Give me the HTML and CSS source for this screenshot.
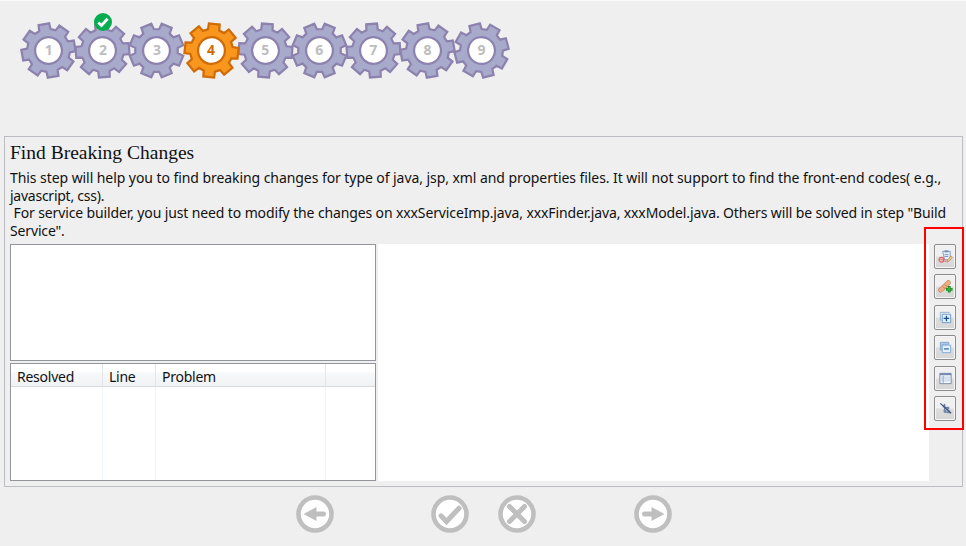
FILE: index.html
```html
<!DOCTYPE html>
<html lang="en">
<head>
<meta charset="utf-8">
<title>Find Breaking Changes</title>
<link rel="stylesheet" href="styles.css">
</head>
<body>
<svg class="defs" width="0" height="0">
  <symbol id="gear" viewBox="-29 -29 58 58">
    <path d="M-5.6-20.3L-5.3-26.2L5.3-26.2L5.6-20.3L10.4-18.3L14.8-22.3L22.3-14.8L18.3-10.4L20.3-5.6L26.2-5.3L26.2 5.3L20.3 5.6L18.3 10.4L22.3 14.8L14.8 22.3L10.4 18.3L5.6 20.3L5.3 26.2L-5.3 26.2L-5.6 20.3L-10.4 18.3L-14.8 22.3L-22.3 14.8L-18.3 10.4L-20.3 5.6L-26.2 5.3L-26.2-5.3L-20.3-5.6L-18.3-10.4L-22.3-14.8L-14.8-22.3L-10.4-18.3Z"/>
    <circle r="13.2" fill="#fff"/>
  </symbol>
</svg>
<header class="steps">
  <div class="step"><svg class="gear r1"><use href="#gear"/></svg><b>1</b></div>
  <div class="step"><svg class="gear r2"><use href="#gear"/></svg><b>2</b>
    <svg class="done" viewBox="0 0 18 18"><circle cx="9" cy="9" r="9" fill="#06ac50"/><path d="M4.3 9.4L7.5 12.5L13.6 5.8" fill="none" stroke="#fff" stroke-width="2.8"/></svg></div>
  <div class="step"><svg class="gear r3"><use href="#gear"/></svg><b>3</b></div>
  <div class="step current"><svg class="gear r4"><use href="#gear"/></svg><b>4</b></div>
  <div class="step"><svg class="gear r5"><use href="#gear"/></svg><b>5</b></div>
  <div class="step"><svg class="gear r3"><use href="#gear"/></svg><b>6</b></div>
  <div class="step"><svg class="gear r2"><use href="#gear"/></svg><b>7</b></div>
  <div class="step"><svg class="gear r1"><use href="#gear"/></svg><b>8</b></div>
  <div class="step"><svg class="gear r9"><use href="#gear"/></svg><b>9</b></div>
</header>
<main class="page">
  <h1>Find Breaking Changes</h1>
  <div class="intro">
    <p class="l1">This step will help you to find breaking changes for type of java, jsp, xml and properties files. It will not support to find the front-end codes( e.g.,</p>
    <p class="l2">javascript, css).</p>
    <p class="l3"> For service builder, you just need to modify the changes on xxxServiceImp.java, xxxFinder.java, xxxModel.java. Others will be solved in step "Build</p>
    <p class="l4">Service".</p>
  </div>
  <div class="work">
    <div class="left">
      <div class="tree"></div>
      <div class="table">
        <div class="col c1"><span>Resolved</span></div>
        <div class="col c2"><span>Line</span></div>
        <div class="col c3"><span>Problem</span></div>
        <div class="col c4"><span></span></div>
      </div>
    </div>
    <div class="viewer"></div>
    <div class="tools">
      <button><svg viewBox="0 0 16 16"><path d="M5 2.5h8v9H7z" fill="#e8f0fa" stroke="#8199bd"/><path d="M7 1.5h4v2H7z" fill="#7089b3"/><path d="M7 6h4M7 8h4" stroke="#7590c0"/><circle cx="3.7" cy="11.5" r="2.5" fill="#fbdada" stroke="#dc6060" stroke-width="1.3"/><path d="M2.3 11.5h2.8" stroke="#d85555"/><path d="M9.500 14l.8-2.600 3.500-4 1.600 1.400-3.600 4.200z" fill="#ecc67a" stroke="#a97d48" stroke-width=".6"/><path d="M7 12h2v2H7z" fill="#e88484"/></svg></button>
      <button><svg viewBox="0 0 16 16"><path d="M2.8 11.8L11 3.9" stroke="#c88260" stroke-width="5.2" stroke-linecap="round"/><path d="M2.8 11.8L11 3.9" stroke="#ebad83" stroke-width="4" stroke-linecap="round"/><path d="M5 7.8l3 3M7.2 5.8l3 3" stroke="#c98259"/><path d="M12 7.5v7M8.5 11h7" stroke="#138a1e" stroke-width="3"/><path d="M12 8.300v5.400M9.300 11h5.400" stroke="#35b039" stroke-width="1.600"/></svg></button>
      <button><svg viewBox="0 0 16 16"><path d="M2.5 11.5v-9h10" fill="none" stroke="#8fb1d2"/><path d="M4.5 4.5h9v9h-9z" fill="#e3f1fc" stroke="#6c98c5"/><path d="M9 6v6M6 9h6" stroke="#164f94" stroke-width="1.4"/></svg></button>
      <button><svg viewBox="0 0 16 16"><path d="M2.5 10.500v-8h9v2h-7v6z" fill="#b9d2eb" stroke="#7fa3cc"/><path d="M4.500 5.500h9v8h-9z" fill="#e3f1fc" stroke="#7fa8d5"/><path d="M6.500 9.500h5" stroke="#3669a2" stroke-width="1.4"/></svg></button>
      <button><svg viewBox="0 0 16 16"><path d="M2 2.500h12v11H2z" fill="#f7fafd" stroke="#7386a6"/><path d="M2 3.500h12" stroke="#7189b1" stroke-width="2"/><path d="M3 6.500h10M3 8.500h10M3 10.500h10" stroke="#b9c9de"/><path d="M5.500 5v8" stroke="#91a8c8"/></svg></button>
      <button><svg viewBox="0 0 16 16"><path d="M7 3v9M7 7h3M7 12h5" stroke="#526b96" fill="none"/><path d="M5 4h3v3H5zM9 6h3v3H9zM6 9h3v3H6zM10 10h3v3h-3z" fill="#7186a9"/><path d="M2.500 2.500L14 13" stroke="#3f5780" stroke-width="1.3"/></svg></button>
    </div>
  </div>
  <div class="highlight"></div>
</main>
<footer class="nav">
  <svg viewBox="0 0 38 38"><circle cx="19" cy="19" r="16.500"/><path class="solid" d="M7.500 19L20.500 12v4.500h7a2.500 2.500 0 0 1 0 5h-7V26z"/></svg>
  <svg viewBox="0 0 38 38"><circle cx="19" cy="19" r="16.500"/><path d="M10 20.800L15.500 26.500L28 13.200"/></svg>
  <svg viewBox="0 0 38 38"><circle cx="19" cy="19" r="16.500"/><path d="M11.500 11.500l15 15M26.500 11.500l-15 15"/></svg>
  <svg viewBox="0 0 38 38"><circle cx="19" cy="19" r="16.500"/><path class="solid" d="M30.500 19L17.500 12v4.500h-7a2.500 2.500 0 0 0 0 5h7V26z"/></svg>
</footer>
</body>
</html>
```
FILE: styles.css
```css
* { box-sizing: border-box; }
body {
  margin: 0;
  width: 966px;
  height: 546px;
  overflow: hidden;
  background: #efefef;
  border-top: 1px solid #fafafa;
  color: #111;
  font: 14px/17.7px "Noto Sans", sans-serif;
}
.defs { position: absolute; }
.steps { display: flex; height: 135px; padding: 19.5px 0 0 19.3px; }
.step { position: relative; width: 54.1px; height: 58px; display: grid; place-items: center; }
.step > b { grid-area: 1 / 1; z-index: 1; color: #bdbdbd; font: bold 14px/16px "Noto Sans", sans-serif; }
.gear {
  grid-area: 1 / 1;
  width: 59px;
  height: 59px;
  fill: #a8aacb;
  stroke: #8d82ae;
  stroke-width: 2.2;
}
.current { z-index: 2; }
.current .gear { fill: #f9961e; stroke: #cf6c08; }
.current > b { color: #cf6c08; }
.r1 { transform: rotate(-10deg); }
.r2 { transform: rotate(-4deg); }
.r3 { transform: rotate(-22.5deg); }
.r4 { transform: rotate(6deg); }
.r5 { transform: rotate(4deg); }
.r9 { transform: rotate(-15deg); }
.done { position: absolute; left: 20.4px; top: -7.500px; width: 18px; height: 18px; z-index: 3; }
.page {
  position: relative;
  width: 959px;
  height: 351px;
  margin-left: 4px;
  padding: 6px 5px 0;
  border: 1px solid #bcbdc2;
}
h1 { margin: 0; height: 25px; font: 19.500px/20px "Liberation Serif", serif; white-space: nowrap; }
.intro { height: 76px; padding-top: 1px; }
.intro p { margin: 0; height: 17.7px; white-space: pre; }
.intro .l1 { letter-spacing: -0.067px; }
.intro .l2 { letter-spacing: -0.25px; }
.intro .l3 { letter-spacing: -0.125px; }
.intro .l4 { letter-spacing: -0.15px; }
.work { display: flex; height: 236.500px; }
.left { width: 366px; display: flex; flex-direction: column; gap: 2px; }
.tree { height: 117px; background: #fff; border: 1px solid #92959c; }
.table { height: 118px; display: flex; background: #fff; border: 1px solid #92959c; }
.col { border-right: 1px solid #eff5fb; }
.col span {
  display: block;
  height: 23px;
  padding-left: 6px;
  line-height: 26px;
  letter-spacing: -0.25px;
  background: linear-gradient(#fff 0 35%, #f7f8fa 40%, #f1f2f4);
  border-bottom: 1px solid #d9dadd;
  border-right: 1px solid #e3e5e8;
  margin-right: -1px;
}
.c1 { width: 92px; }
.c2 { width: 53px; }
.c3 { width: 170px; }
.c4 { flex: 1; border: 0; }
.c4 span { margin: 0; border-right: 0; }
.viewer { width: 551px; margin-left: 2px; background: #fff; }
.tools { display: flex; flex-direction: column; gap: 5.4px; margin: 0 0 0 5px; }
.tools button {
  width: 22px;
  height: 25px;
  padding: 0;
  display: grid;
  place-items: center;
  border: 1px solid #8c8c8c;
  border-radius: 2px;
  background: linear-gradient(#f0f0f0 48%, #dddddd 52%, #d6d6d6);
  box-shadow: inset 0 0 0 1px #f6f6f6;
}
.tools svg { width: 15px; height: 15px; }
.highlight {
  position: absolute;
  left: 919px;
  top: 90px;
  width: 40px;
  height: 203px;
  border: 2px solid #fe0000;
}
.nav { display: flex; padding: 7.500px 0 0 296px; }
.nav svg { width: 38px; height: 38px; fill: #fff; stroke: #bfbfbf; stroke-width: 4.6; stroke-linecap: round; }
.nav path { fill: none; stroke-width: 5; }
.nav .solid { fill: #bfbfbf; stroke: none; }
.nav svg:nth-child(2) { margin-left: 97px; }
.nav svg:nth-child(3) { margin-left: 29px; }
.nav svg:nth-child(4) { margin-left: 98px; }
```
